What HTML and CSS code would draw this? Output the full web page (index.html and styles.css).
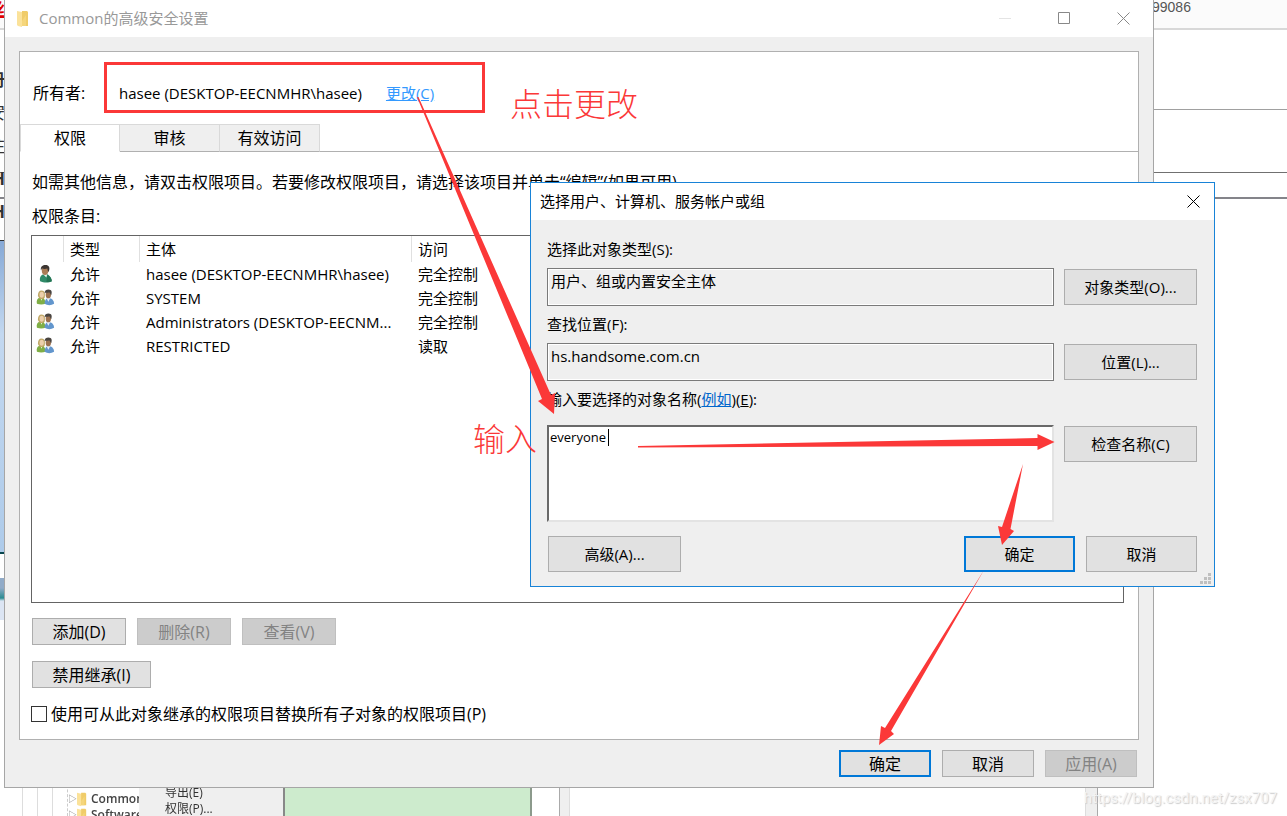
FILE: index.html
```html
<!DOCTYPE html>
<html lang="zh-CN">
<head>
<meta charset="utf-8">
<title>Common的高级安全设置</title>
<link rel="stylesheet" href="styles.css">
</head>
<body>
<svg class="defs" aria-hidden="true">
  <symbol id="user" viewBox="0 0 18 20">
    <path d="M3 18c-1-4 1-7 4-8l4 0c3 2 5 5 5 8-3 2-9 2-13 0z" fill="#2f8a68"/>
    <path d="M6 10l4 4 1-4z" fill="#e8f3ee"/>
    <path d="M11 11c3 1 5 4 5 7-2 1-4 1-6 1z" fill="#237453"/>
    <ellipse cx="8.500" cy="6.500" rx="3.600" ry="4.600" fill="#a97c56"/>
    <path d="M4 6c-1-4 2-6 5-6 4 0 5 3 4 6l-1 2-1-4c-3 1-5 0-6 0z" fill="#3c3632"/>
  </symbol>
  <symbol id="group" viewBox="0 0 20 18">
    <path d="M1 15c-1-4 1-6 4-7 3 0 5 3 5 7-3 1-6 1-9 0z" fill="#7fae45"/>
    <path d="M4 8l2 4 1-4z" fill="#f2f6e8"/>
    <path d="M2 7c0-4 1-6 4-6s4 3 3 8l-2 1H4z" fill="#bfa765"/>
    <ellipse cx="6" cy="5.500" rx="2.300" ry="3.200" fill="#eccfac"/>
    <path d="M9 15c0-4 2-6 4-6 4 0 6 3 6 6-3 2-7 2-10 0z" fill="#6296cd"/>
    <path d="M11 9l2 4 2-4z" fill="#e6eff8"/>
    <ellipse cx="13" cy="5.500" rx="2.800" ry="3.800" fill="#9b7150"/>
    <path d="M9 4c0-3 2-4 4-4 4 0 4 3 3 6l-2-3c-2 1-4 0-5 1z" fill="#494440"/>
  </symbol>
  <symbol id="folder" viewBox="0 0 14 18">
    <path d="M6 1h5l1 1v14H5z" fill="#f0cc69"/>
    <path d="M1 1l5 1v15l-4-1-1-1z" fill="#fbe29a"/>
    <path d="M6 11l4-6v11H6z" fill="#f5d67c"/>
  </symbol>
</svg>

<div class="desktop">
  <div class="page" aria-hidden="true">
    <div class="page-head">99086</div>
    <div class="page-rule first"></div>
    <div class="page-rule second"></div>
    <div class="page-rule third"></div>
  </div>
  <div class="article" aria-hidden="true">
    <b class="red">丝</b>
    <b>册</b><span>安</span><span>注</span><b>H</b><b>H</b>
    <div class="shot"></div>
    <div class="shot-bar"></div>
  </div>
  <div class="registry" aria-hidden="true">
    <div class="tree">
      <i class="guide"></i><i class="guide"></i><i class="guide"></i>
      <div class="nodes">
        <div class="node"><small>▷</small><svg class="node-icon"><use href="#folder"/></svg>Common</div>
        <div class="node"><small>▷</small><svg class="node-icon"><use href="#folder"/></svg>Software</div>
      </div>
    </div>
    <div class="context"><div>导出(E)</div><div>权限(P)...</div></div>
    <div class="green"></div>
    <div class="bar left"></div>
    <div class="bar right"></div>
  </div>

  <main class="window">
    <header class="titlebar">
      <svg class="folder"><use href="#folder"/></svg>
      <h1>Common的高级安全设置</h1>
      <div class="controls">
        <button aria-label="最小化" disabled><svg viewBox="0 0 13 13"><path d="M0 6.500h12" stroke="#e4e4e4"/></svg></button>
        <button aria-label="最大化"><svg viewBox="0 0 13 13"><path d="M.5.5h11v11H.5z" stroke="#888"/></svg></button>
        <button aria-label="关闭"><svg viewBox="0 0 13 13"><path d="M.5.5l12 12M12.500.5l-12 12" stroke="#888"/></svg></button>
      </div>
    </header>
    <div class="panel">
      <div class="owner">
        <span class="owner-label">所有者:</span>
        <span class="owner-name">hasee (DESKTOP-EECNMHR\hasee)</span>
        <a href="#change" class="change">更改(C)</a>
      </div>
      <nav class="tabs">
        <button class="tab active">权限</button>
        <button class="tab">审核</button>
        <button class="tab">有效访问</button>
      </nav>
      <div class="content">
        <p>如需其他信息，请双击权限项目。若要修改权限项目，请选择该项目并单击“编辑”(如果可用)。</p>
        <p>权限条目:</p>
        <div class="list">
          <table>
            <colgroup><col class="c-icon"><col class="c-type"><col class="c-name"><col></colgroup>
            <thead><tr><th></th><th>类型</th><th>主体</th><th>访问</th></tr></thead>
            <tbody>
              <tr><td><svg class="who"><use href="#user"/></svg></td><td>允许</td><td>hasee (DESKTOP-EECNMHR\hasee)</td><td>完全控制</td></tr>
              <tr><td><svg class="who"><use href="#group"/></svg></td><td>允许</td><td>SYSTEM</td><td>完全控制</td></tr>
              <tr><td><svg class="who"><use href="#group"/></svg></td><td>允许</td><td>Administrators (DESKTOP-EECNM...</td><td>完全控制</td></tr>
              <tr><td><svg class="who"><use href="#group"/></svg></td><td>允许</td><td>RESTRICTED</td><td>读取</td></tr>
            </tbody>
          </table>
        </div>
        <div class="actions">
          <button class="btn">添加(D)</button>
          <button class="btn" disabled>删除(R)</button>
          <button class="btn" disabled>查看(V)</button>
        </div>
        <div class="actions"><button class="btn wide">禁用继承(I)</button></div>
        <label class="replace"><input type="checkbox">使用可从此对象继承的权限项目替换所有子对象的权限项目(P)</label>
      </div>
    </div>
    <footer class="footer">
      <button class="btn primary">确定</button>
      <button class="btn">取消</button>
      <button class="btn" disabled>应用(A)</button>
    </footer>
  </main>

  <div class="note note-click">点击更改</div>

  <section class="dialog" role="dialog" aria-labelledby="dialog-title">
    <header class="dialog-title">
      <h2 id="dialog-title">选择用户、计算机、服务帐户或组</h2>
      <button aria-label="关闭"><svg viewBox="0 0 13 13"><path d="M.5.5l12 12M12.500.5l-12 12" stroke="#000"/></svg></button>
    </header>
    <div class="form">
      <label for="type">选择此对象类型(S):</label>
      <div class="line"><textarea id="type" class="field" rows="1" readonly>用户、组或内置安全主体</textarea><button class="btn">对象类型(O)...</button></div>
      <label for="place">查找位置(F):</label>
      <div class="line"><textarea id="place" class="field" rows="1" readonly>hs.handsome.com.cn</textarea><button class="btn">位置(L)...</button></div>
      <div class="names-label"><label for="names">输入要选择的对象名称(</label><a href="#example">例如</a><label for="names">)(<u>E</u>):</label></div>
      <div class="line"><div class="names"><textarea id="names" rows="3" spellcheck="false">everyone</textarea><i class="caret"></i></div><button class="btn">检查名称(C)</button></div>
      <div class="dialog-actions">
        <button class="btn advanced">高级(A)...</button>
        <button class="btn primary">确定</button>
        <button class="btn">取消</button>
      </div>
    </div>
    <svg class="grip" viewBox="0 0 11 11"><path d="M8 0h3v3H8zM4 4h3v3H4zM8 4h3v3H8zM0 8h3v3H0zM4 8h3v3H4zM8 8h3v3H8z" fill="#bfbfbf"/></svg>
  </section>

  <div class="note note-type">输入</div>
  <svg class="arrows" aria-hidden="true">
    <rect x="105.500" y="63.500" width="378" height="48" fill="none" stroke="#fb3838" stroke-width="3"/>
    <g fill="#fb3838">
      <path d="M417 97h1.500l132.500 298 4-2-1 21-16-13 4-2z"/>
      <path d="M638 446v1.500l399.500-1.500v4l17-8-17-8v4z"/>
      <path d="M1023 464l-12.500 65 3.500 2-12 14-4-19 4 1z"/>
      <path d="M984 570l-93 161 3 3-15 11 2-19 4 2z"/>
    </g>
  </svg>
  <div class="watermark">https://blog.csdn.net/zsx707</div>
</div>
</body>
</html>
```
FILE: styles.css
```css
* { box-sizing: border-box; }
body {
  margin: 0;
  font-family: "Open Sans", "Noto Sans CJK SC", sans-serif;
  font-size: 15px;
  line-height: 20px;
  color: #000;
  background: #fff;
}
button, textarea, input { font: inherit; color: inherit; margin: 0; }
h1, h2, p { margin: 0; font-size: inherit; font-weight: 400; }
.defs { position: absolute; width: 0; height: 0; }
.desktop { position: relative; min-height: 100vh; overflow: hidden; }

/* page behind the windows */
.page { position: absolute; inset: 0 0 auto 0; }
.page-head {
  height: 30px;
  padding-left: 1152px;
  font-family: "Liberation Sans", sans-serif;
  font-size: 14px;
  line-height: 14px;
  color: #555;
  background: #fbfbfb;
  border-bottom: 2px solid #d8d8d8;
}
.page-rule { border-bottom: 1px solid #a0a0a0; height: 80px; }
.page-rule.second { height: 63px; border-color: #707070; }
.page-rule.third { height: 26px; border-bottom: 2px solid #84848a; }
.article {
  position: absolute;
  left: -12px;
  top: 0;
  width: 17px;
  display: flex;
  flex-direction: column;
  font-size: 17px;
  line-height: 33px;
  text-align: right;
  color: #333;
}
.article .red { height: 63px; line-height: 20px; color: #e00000; text-decoration: underline; }
.shot { height: 314px; margin-top: 12px; background: linear-gradient(#86a9d6, #c3d8f0 30%, #aecbea); border-top: 1px solid #333; border-bottom: 2px solid #08464d; }
.shot-bar { height: 42px; margin-top: 24px; background: linear-gradient(#91abc8 10px, #2b8c91 20px, #dce5f3 23px); }

.registry { position: absolute; left: 0; right: 0; top: 780px; height: 36px; display: flex; overflow: hidden; color: #333; font-size: 12px; }
.tree { width: 139px; display: flex; padding-left: 22px; overflow: hidden; }
.guide { width: 15px; flex: none; border-left: 1px solid #ddd; }
.nodes { padding-top: 11px; border-left: 1px dashed #ccc; }
.node { display: flex; align-items: center; height: 16px; font-size: 12px; filter: blur(0.4px); font-weight: 600; color: #444; }
.node small { width: 7px; font-size: 9px; color: #999; }
.node-icon { width: 14px; height: 15px; margin-right: 2px; flex: none; }
.context { width: 146px; padding: 5px 0 0 26px; line-height: 16px; background: #efefef; border-right: 2px solid #888; filter: blur(0.4px); }
.green { width: 247px; background: #cdebcd; border-right: 2px solid #8c9a8c; }
.bar { width: 11px; margin-left: 27px; background: #efefef; border-left: 1px solid #aaa; border-right: 1px solid #ddd; }
.bar.right { width: 13px; margin-left: 515px; border-left-color: #ddd; border-right-color: #aaa; }

/* security settings window */
.window {
  position: absolute;
  top: 0;
  left: 4px;
  right: 133px;
  background: #efefef;
  border: 1px solid #a6a6a6;
  border-top: 0;
}
.titlebar { display: flex; align-items: center; height: 37px; padding-left: 11px; background: #fff; color: #999; }
.titlebar h1, .dialog-title h2 { padding-bottom: 2px; }
.folder { width: 14px; height: 18px; margin-right: 9px; }
.controls { display: flex; margin-left: auto; }
.controls button { width: 59px; height: 36px; padding: 0; border: 0; background: none; }
.controls svg, .dialog-title svg { width: 13px; height: 13px; fill: none; display: block; margin: auto; }
.panel { margin: 14px 14px 0; background: #fff; border: 1px solid #b0b0b0; }
.owner { display: flex; height: 72px; padding: 31px 0 0 13px; }
.owner-label { width: 86px; font-size: 16px; }
.change { margin-left: 24px; color: #3399ff; }
.tabs { display: flex; height: 28px; border-bottom: 1px solid #b0b0b0; }
.tab { width: 100px; height: 28px; padding: 0; font-size: 16px; line-height: 26px; background: #efefef; border: 1px solid #d9d9d9; border-left: 0; border-bottom-color: #b0b0b0; }
.tab.active { background: #fff; border-left: 1px solid #d9d9d9; border-bottom-color: #fff; }
.content { padding: 20px 14px 15px 11px; font-size: 16px; }
.content p { padding-left: 1px; margin-bottom: 14px; white-space: nowrap; overflow: hidden; }
.content p + p { margin-bottom: 9px; }
.list { height: 368px; border: 1px solid #646464; margin-bottom: 15px; font-size: 15px; }
table { width: 100%; table-layout: fixed; border-collapse: separate; border-spacing: 0; }
.c-icon { width: 32px; }
.c-type { width: 76px; }
.c-name { width: 272px; }
th, td { height: 24px; padding: 0 0 0 6px; text-align: left; font-weight: 400; white-space: nowrap; line-height: 20px; }
th { height: 26px; border-right: 1px solid #e0e0e0; }
th:last-child { border: 0; }
td:first-child { padding: 0 0 0 4px; }
.who { display: block; width: 19px; height: 18px; }
.btn { height: 27px; width: 94px; padding: 0; font-size: 16px; line-height: 20px; background: #e1e1e1; border: 1px solid #adadad; }
.btn:disabled { background: #ccc; border-color: #bfbfbf; color: #838383; }
.btn.primary { border: 2px solid #0078d7; }
.actions { display: flex; gap: 11px; margin: 0 0 16px 1px; }
.btn.wide { width: 119px; }
.replace { display: flex; align-items: center; gap: 4px; font-size: 16px; }
.replace input { appearance: none; width: 16px; height: 16px; border: 1px solid #333; background: #fff; }
.footer { display: flex; justify-content: flex-end; gap: 11px; padding: 10px 16px; }
.footer .btn { width: 92px; }

/* object picker dialog */
.dialog {
  position: absolute;
  top: 182px;
  left: 530px;
  right: 72px;
  background: #efefef;
  border: 1px solid #1883d7;
}
.dialog-title { display: flex; align-items: center; justify-content: space-between; height: 37px; padding: 0 0 0 9px; background: #fff; }
.dialog-title button { width: 42px; height: 36px; padding: 0; border: 0; background: none; }
.form { padding: 19px 17px 14px 16px; }
.form label { display: block; }
.line { display: flex; align-items: flex-start; gap: 10px; margin: 9px 0 8px; }
.form .btn { width: 133px; height: 36px; font-size: 15px; flex: none; }
.line .btn { margin-top: 1px; }
.field { flex: 1; height: 38px; padding: 2px 3px; line-height: 20px; resize: none; overflow: hidden; background: #efefef; border: 1px solid #7a7a7a; outline: 0; box-shadow: inset 0 0 0 1px #fff; }
.names-label { display: flex; }
.names-label a { color: #0066cc; }
.names-label + .line { margin: 16px 0 14px; }
.names { position: relative; flex: 1; }
.names textarea { display: block; width: 100%; height: 97px; padding: 0 1px; font-size: 13px; line-height: 20px; resize: none; background: #fff; border: 2px solid; border-color: #696969 #e3e3e3 #e3e3e3 #696969; outline: 0; }
.caret { position: absolute; left: 61px; top: 4px; width: 1px; height: 17px; background: #000; }
.dialog-actions { display: flex; gap: 11px; padding-left: 1px; }
.dialog-actions .advanced { margin-right: auto; }
.dialog-actions .btn:not(.advanced) { width: 111px; }
.grip { position: absolute; right: 3px; bottom: 2px; width: 11px; height: 11px; }

/* annotations */
.note { position: absolute; font-family: "Noto Sans CJK SC", sans-serif; font-weight: 300; font-size: 32px; line-height: 40px; color: #fb3838; }
.note-click { left: 510px; top: 82px; }
.note-type { left: 473px; top: 417px; }
.arrows { position: absolute; left: 0; top: 0; width: 100%; height: 100%; pointer-events: none; }
.watermark { position: absolute; right: 10px; top: 788px; font-family: Roboto, sans-serif; font-size: 15px; color: #f4f4f4; text-shadow: 1px 1px 1px #ccc; }
```
